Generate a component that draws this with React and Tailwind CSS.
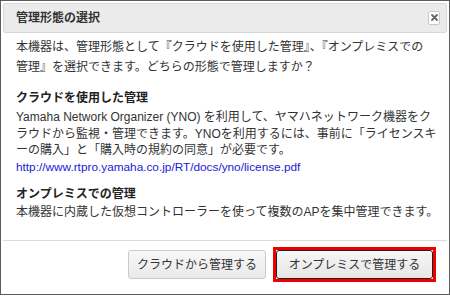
export default function App() {
  const font = {
    fontFamily: '"Liberation Sans", "Noto Sans CJK JP", sans-serif',
  };

  return (
    <div className="w-[450px] h-[296px] bg-white" style={font}>
      <div className="h-[295px] border border-[#5c5c5c] bg-white p-[2px] flex flex-col text-[12px] text-[#333]">
        {/* header */}
        <div className="h-[30px] shrink-0 flex items-center justify-between bg-[#ebebeb] border border-[#d9d9d9] rounded-[2px] pl-[12px] pr-[6px]">
          <span className="font-bold text-[12px] text-[#333] leading-none">管理形態の選択</span>
          <button className="w-[12px] h-[14px] mt-[-1px] flex items-center justify-center bg-white border border-[#c9c9c9] rounded-[2px]">
            <svg width="7" height="7" viewBox="0 0 7 7">
              <path d="M1 1L6 6M6 1L1 6" stroke="#666" strokeWidth="1.8" strokeLinecap="round" />
            </svg>
          </button>
        </div>

        {/* body */}
        <div className="flex-1 px-[13px] pt-[5px] whitespace-nowrap">
          <p className="leading-[19.5px]">
            本機器は、管理形態として『クラウドを使用した管理』、『オンプレミスでの
            <br />
            管理』を選択できます。どちらの形態で管理しますか？
          </p>

          <h3 className="mt-[12px] font-bold text-[#222] leading-[19px]">クラウドを使用した管理</h3>
          <p className="mt-[1px] leading-[16.5px]">
            Yamaha Network Organizer (YNO) を利用して、ヤマハネットワーク機器をク
            <br />
            ラウドから監視・管理できます。YNOを利用するには、事前に「ライセンスキ
            <br />
            ーの購入」と「購入時の規約の同意」が必要です。
            <br />
            <a href="#" className="text-[#1a1ad6] text-[11.8px]">
              http://www.rtpro.yamaha.co.jp/RT/docs/yno/license.pdf
            </a>
          </p>

          <h3 className="mt-[10px] font-bold text-[#222] leading-[19px]">オンプレミスでの管理</h3>
          <p className="leading-[16.5px]">
            本機器に内蔵した仮想コントローラーを使って複数のAPを集中管理できます。
          </p>
        </div>

        {/* footer */}
        <div className="h-[52px] shrink-0 border-t border-[#dcdcdc] flex items-start justify-end gap-[7px] pt-[6px] pr-[11px]">
          <button className="mt-[3px] h-[29px] w-[138px] bg-gradient-to-b from-[#f8f8f8] to-[#e9e9e9] border border-[#cacaca] rounded-[3px] text-[12px] text-[#333]">
            クラウドから管理する
          </button>
          <div className="border-[3px] border-[#ee0000]">
            <button className="block h-[29px] w-[157px] bg-gradient-to-b from-[#f6f6f6] to-[#e6e6e6] border border-[#1f1f1f] rounded-[3px] text-[12px] text-[#333]">
              オンプレミスで管理する
            </button>
          </div>
        </div>
      </div>
    </div>
  );
}
